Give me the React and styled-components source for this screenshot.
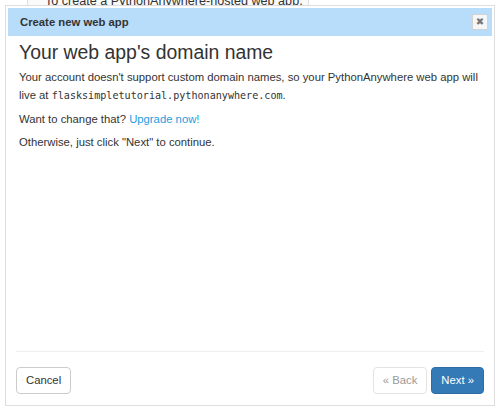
import React from 'react'
import styled, {createGlobalStyle} from 'styled-components'

const GlobalStyle = createGlobalStyle`
  html, body {
    margin: 0;
    padding: 0;
    background: #fff;
  }
  body {
    font-family: "Liberation Sans", Arial, sans-serif;
    font-size: 11.3px;
    color: #333;
  }
`

const Page = styled.div`
  position: relative;
  width: 500px;
  height: 411px;
  overflow: hidden;
`

const BackPanel = styled.div`
  margin: -15px 0 0 27px;
  width: 282px;
  height: 60px;
  border: 1px solid #ddd;
  background: #fafafa;
  padding: 6px 0 0 17px;
  box-sizing: border-box;
  font-size: 12.6px;
  line-height: 18px;
`

const Dialog = styled.div`
  position: absolute;
  left: 5px;
  top: 5px;
  width: 490px;
  height: 401px;
  box-sizing: border-box;
  border: 1px solid #ddd;
  padding: 2px;
  background: #fff;
  display: flex;
  flex-direction: column;
`

const TitleBar = styled.div`
  height: 28px;
  background: #b8ddfa;
  display: flex;
  align-items: center;
  justify-content: space-between;
  padding: 0 4px 0 12px;
`

const Title = styled.span`
  font-weight: bold;
  font-size: 11.3px;
  color: #333;
`

const CloseButton = styled.button`
  width: 16px;
  height: 16px;
  padding: 0;
  border: 1px solid #d3d3d3;
  background: #f6f6f6;
  color: #777;
  font-size: 10px;
  line-height: 14px;
  font-family: "DejaVu Sans", sans-serif;
  font-weight: bold;
  display: flex;
  align-items: center;
  justify-content: center;
`

const Content = styled.div`
  flex: 1;
  padding: 3px 11px 0;
`

const Heading = styled.h2`
  font-family: "Liberation Sans", Arial, sans-serif;
  font-weight: normal;
  font-size: 19.4px;
  line-height: 26px;
  margin: 0 0 3px;
  color: #333;
`

const Para = styled.p`
  margin: 0 0 ${p => p.$gap ?? 5}px;
  line-height: 18px;
`

const Code = styled.code`
  font-family: "DejaVu Sans Mono", monospace;
  font-size: 10.1px;
  line-height: 0;
`

const Link = styled.a`
  color: #1e9de0;
  text-decoration: none;
`

const Footer = styled.div`
  margin: 0 8px;
  border-top: 1px solid #eee;
  padding: 15px 0 9px;
  display: flex;
  align-items: center;
`

const Spacer = styled.div`
  flex: 1;
`

const Button = styled.button`
  font-family: "Liberation Sans", Arial, sans-serif;
  font-size: 11.3px;
  line-height: 17px;
  height: 27px;
  padding: 4px 9px;
  border-radius: 4px;
  border: 1px solid ${p => p.$primary ? '#2e6da4' : p.$disabled ? '#e3e3e3' : '#ccc'};
  background: ${p => p.$primary ? '#337ab7' : '#fff'};
  color: ${p => p.$primary ? '#fff' : p.$disabled ? '#999' : '#333'};
  margin-left: ${p => p.$gap || 0}px;
`

export default function App() {
  return (
    <Page>
      <GlobalStyle />
      <BackPanel>To create a PythonAnywhere-hosted web app,</BackPanel>
      <Dialog>
        <TitleBar>
          <Title>Create new web app</Title>
          <CloseButton>✖</CloseButton>
        </TitleBar>
        <Content>
          <Heading>Your web app's domain name</Heading>
          <Para $gap={6}>
            Your account doesn't support custom domain names, so your PythonAnywhere web app will
            live at <Code>flasksimpletutorial.pythonanywhere.com</Code>.
          </Para>
          <Para>
            Want to change that? <Link href="#">Upgrade now!</Link>
          </Para>
          <Para>Otherwise, just click "Next" to continue.</Para>
        </Content>
        <Footer>
          <Button>Cancel</Button>
          <Spacer />
          <Button $disabled>« Back</Button>
          <Button $primary $gap={4}>Next »</Button>
        </Footer>
      </Dialog>
    </Page>
  )
}
